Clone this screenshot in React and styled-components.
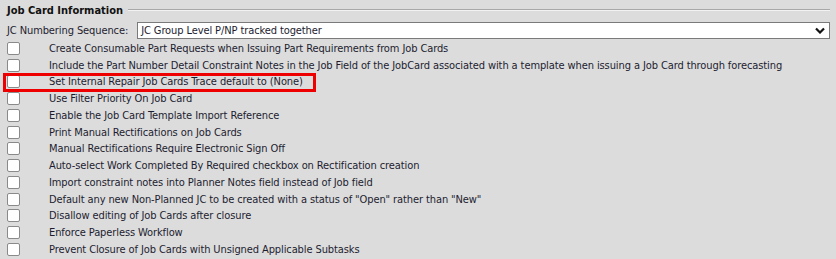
import React from 'react';
import styled, { createGlobalStyle } from 'styled-components';

const GlobalStyle = createGlobalStyle`
  html, body {
    margin: 0;
    padding: 0;
    background: #dcdcdc;
  }
  body {
    font-family: "DejaVu Sans Condensed", "DejaVu Sans", sans-serif;
    font-size: 11px;
    color: #1c1c30;
  }
`;

const Section = styled.div`
  padding: 3px 6px 0 7px;
  width: 836px;
  box-sizing: border-box;
`;

const Header = styled.div`
  display: flex;
  align-items: center;
  gap: 5px;
  height: 14px;
`;

const Title = styled.span`
  font-weight: bold;
  color: #111;
  white-space: nowrap;
`;

const Rule = styled.div`
  flex: 1;
  height: 0;
  border-top: 1px solid #a8a8a8;
  border-bottom: 1px solid #f2f2f2;
`;

const SelectRow = styled.div`
  display: flex;
  align-items: center;
  gap: 9px;
  margin-top: 5px;
  height: 17px;
  letter-spacing: -0.1px;
`;

const SelectBox = styled.div`
  flex: 1;
  display: flex;
  align-items: center;
  justify-content: space-between;
  height: 15px;
  background: #fff;
  border: 1px solid #7a7a7a;
  padding: 0 4px 0 3px;
`;

const List = styled.div`
  display: flex;
  flex-direction: column;
  margin-top: 1px;
  letter-spacing: -0.1px;
`;

const Row = styled.div`
  display: flex;
  align-items: center;
  height: 16.75px;
  gap: 29px;
  position: relative;
`;

const Highlight = styled.div`
  position: absolute;
  left: -4px;
  top: -1px;
  width: 307px;
  height: 13px;
  border: 3px solid #ee0000;
`;

const Box = styled.span`
  width: 11px;
  height: 11px;
  border: 1px solid #8a8a8a;
  border-radius: 2px;
  background: #fff;
  flex: none;
`;

const options = [
  'Create Consumable Part Requests when Issuing Part Requirements from Job Cards',
  'Include the Part Number Detail Constraint Notes in the Job Field of the JobCard associated with a template when issuing a Job Card through forecasting',
  'Set Internal Repair Job Cards Trace default to (None)',
  'Use Filter Priority On Job Card',
  'Enable the Job Card Template Import Reference',
  'Print Manual Rectifications on Job Cards',
  'Manual Rectifications Require Electronic Sign Off',
  'Auto-select Work Completed By Required checkbox on Rectification creation',
  'Import constraint notes into Planner Notes field instead of Job field',
  'Default any new Non-Planned JC to be created with a status of "Open" rather than "New"',
  'Disallow editing of Job Cards after closure',
  'Enforce Paperless Workflow',
  'Prevent Closure of Job Cards with Unsigned Applicable Subtasks',
];

export default function App() {
  return (
    <>
      <GlobalStyle />
      <Section>
        <Header>
          <Title>Job Card Information</Title>
          <Rule />
        </Header>
        <SelectRow>
          <span>JC Numbering Sequence:</span>
          <SelectBox>
            <span>JC Group Level P/NP tracked together</span>
            <svg width="10" height="7" viewBox="0 0 10 7">
              <path d="M1 1.5 L5 5.5 L9 1.5" fill="none" stroke="#111" strokeWidth="2.2" />
            </svg>
          </SelectBox>
        </SelectRow>
        <List>
          {options.map((text, i) => (
            <Row key={i}>
              {i === 2 && <Highlight />}
              <Box />
              <span>{text}</span>
            </Row>
          ))}
        </List>
      </Section>
    </>
  );
}
